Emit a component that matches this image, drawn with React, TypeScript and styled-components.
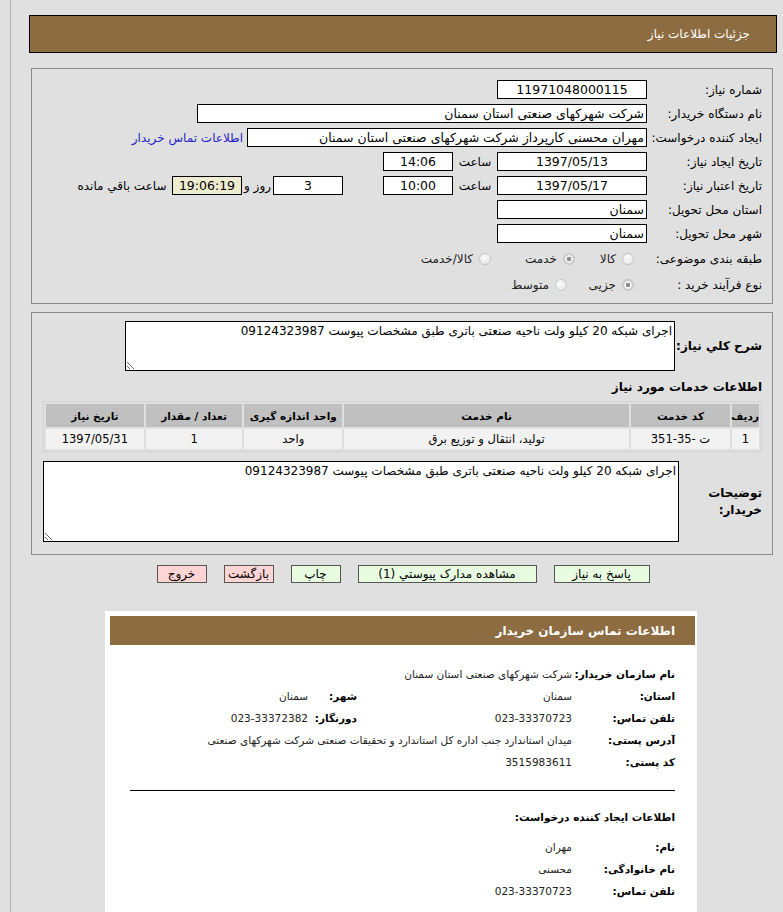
import React from 'react';
import styled, { createGlobalStyle } from 'styled-components';

const GlobalStyle = createGlobalStyle`
  body {
    margin: 0;
    background: #e0e0e0;
    font-family: Tahoma, "DejaVu Sans", sans-serif;
    font-size: 12px;
    color: #000;
  }
`;

const Page = styled.div`
  direction: rtl;
  margin-left: 10px;
  border-left: 1px solid #b4b4b4;
  min-height: 912px;
  padding: 15px 6px 0 18px;
  box-sizing: border-box;
`;

const TitleBar = styled.div`
  height: 38px;
  box-sizing: border-box;
  border: 1px solid #000;
  background: #8c6c40;
  color: #fff;
  display: flex;
  align-items: center;
  padding-right: 26px;
  font-size: 12px;
`;

const Panel = styled.div<{ $top: number }>`
  margin: ${(p) => p.$top}px 4px 0 2px;
  border: 1px solid #8a8a8a;
  box-sizing: border-box;
`;

const FormPanel = styled(Panel)`
  padding: 11px 10px 8px 0;
  display: flex;
  flex-direction: column;
  gap: 5px;
`;

const FormRow = styled.div`
  display: flex;
  align-items: center;
  height: 19px;
`;

const RadioRow = styled(FormRow)`
  height: 20px;
  margin-top: 1px;
`;

const Label = styled.div`
  width: 112px;
  flex-shrink: 0;
  margin-left: 3px;
  white-space: nowrap;
`;

const Box = styled.div<{ $w: number; $center?: boolean; $tint?: boolean }>`
  width: ${(p) => p.$w}px;
  height: 19px;
  box-sizing: border-box;
  border: 1px solid #000;
  background: ${(p) => (p.$tint ? '#eeecce' : '#fff')};
  text-align: ${(p) => (p.$center ? 'center' : 'right')};
  padding: 0 2px;
  font-size: 12.5px;
  line-height: 17px;
  white-space: nowrap;
  overflow: hidden;
  flex-shrink: 0;
`;

const SubLabel = styled.div<{ $w: number }>`
  width: ${(p) => p.$w}px;
  text-align: center;
  flex-shrink: 0;
  white-space: nowrap;
`;

const Spacer = styled.div<{ $w: number }>`
  width: ${(p) => p.$w}px;
  flex-shrink: 0;
`;

const Link = styled.a`
  color: #2525c8;
  text-decoration: none;
  margin-right: 4px;
  white-space: nowrap;
`;

const RadioGroup = styled.div`
  display: flex;
  align-items: center;
  padding-right: 13px;
`;

const Option = styled.label<{ $w?: number }>`
  display: flex;
  align-items: center;
  gap: 6px;
  width: ${(p) => (p.$w ? `${p.$w}px` : 'auto')};
  flex-shrink: 0;
  color: #222;
`;

const Radio = styled.span<{ $on?: boolean }>`
  width: 12px;
  height: 12px;
  border-radius: 50%;
  box-sizing: border-box;
  border: 1px solid #c6c6c6;
  background: ${(p) =>
    p.$on
      ? 'radial-gradient(circle, #8c8c8c 0 2px, #f2f2f2 2.5px 3.5px, #d0d0d0 4px)'
      : 'radial-gradient(circle at 40% 35%, #fafafa, #e4e4e4)'};
`;

const DetailPanel = styled(Panel)`
  padding: 8px 10px 12px 0;
`;

const AreaRow = styled.div<{ $top?: number }>`
  display: flex;
  align-items: center;
  margin-top: ${(p) => p.$top ?? 0}px;
`;

const BoldLabel = styled.div<{ $w: number }>`
  width: ${(p) => p.$w}px;
  flex-shrink: 0;
  font-weight: bold;
  font-size: 12px;
  line-height: 17px;
  white-space: nowrap;
`;

const WrapText = styled.span`
  display: inline-block;
  max-width: 62px;
  white-space: normal;
`;

const TextArea = styled.textarea<{ $w: number; $h: number }>`
  width: ${(p) => p.$w}px;
  height: ${(p) => p.$h}px;
  box-sizing: border-box;
  border: 1px solid #000;
  background: #fff;
  font-family: inherit;
  font-size: 12px;
  padding: 2px 2px;
  margin: 0;
  direction: rtl;
  outline: none;
`;

const SectionTitle = styled.div`
  margin-top: 8px;
  font-weight: bold;
  font-size: 12px;
  line-height: 16px;
`;

const ItemsTable = styled.table`
  margin: 6px 0 0 12px;
  width: 719px;
  table-layout: fixed;
  border: 1px solid #d2d2d2;
  border-spacing: 2px;
  font-size: 11.5px;
  th {
    background: #c0c0c0;
    height: 23px;
    font-weight: bold;
    font-size: 10.5px;
    padding: 0;
    white-space: nowrap;
  }
  td {
    background: #f2f2f2;
    height: 20px;
    text-align: center;
    padding: 0;
    white-space: nowrap;
  }
`;

const ButtonBar = styled.div`
  display: flex;
  justify-content: center;
  gap: 17px;
  margin-top: 10px;
  direction: rtl;
`;

const Button = styled.button<{ $w: number; $pink?: boolean }>`
  width: ${(p) => p.$w}px;
  height: 18px;
  padding: 0;
  border: 1px solid #555;
  background: ${(p) => (p.$pink ? '#ffd4d4' : '#e8fce2')};
  font-family: inherit;
  font-size: 12px;
  line-height: 16px;
  white-space: nowrap;
`;

const ContactCard = styled.div`
  width: 592px;
  margin: 28px 80px 0 auto;
  background: #fff;
  padding: 5px 2px 20px 5px;
  box-sizing: border-box;
  min-height: 300px;
`;

const ContactHeader = styled.div`
  height: 29px;
  background: #8c6c40;
  color: #fff;
  font-weight: bold;
  font-size: 12px;
  display: flex;
  align-items: center;
  padding-right: 20px;
`;

const ContactBody = styled.div`
  padding: 18px 20px 0;
`;

const InfoGrid = styled.div`
  display: grid;
  grid-template-columns: 103px 215px 49px 1fr;
  grid-auto-rows: 22px;
  align-items: center;
`;

const InfoLabel = styled.div`
  font-weight: bold;
  font-size: 10.5px;
  white-space: nowrap;
`;

const InfoValue = styled.div<{ $span?: number }>`
  font-size: 10.5px;
  color: #222;
  white-space: nowrap;
  grid-column: ${(p) => (p.$span ? `span ${p.$span}` : 'auto')};
`;

const Rule = styled.hr`
  margin: 17px 0 0;
  border: 0;
  border-top: 1px solid #000;
`;

const SubTitle = styled.div`
  margin: 18px 0 11px;
  font-weight: bold;
  font-size: 10.5px;
  line-height: 16px;
`;

const desc = 'اجرای شبکه 20 کیلو ولت ناحیه صنعتی باتری طبق مشخصات پیوست 09124323987';

const columns = [
  { title: 'ردیف', w: 27 },
  { title: 'کد خدمت', w: 98 },
  { title: 'نام خدمت', w: 283 },
  { title: 'واحد اندازه گیری', w: 97 },
  { title: 'تعداد / مقدار', w: 96 },
  { title: 'تاریخ نیاز', w: 97 },
];

const rows = [['1', 'ت -35-351', 'تولید، انتقال و توزیع برق', 'واحد', '1', '1397/05/31']];

const App = () => {
  return (
    <Page>
      <GlobalStyle />
      <TitleBar>جزئيات اطلاعات نياز</TitleBar>

      <FormPanel $top={15}>
        <FormRow>
          <Label>شماره نیاز:</Label>
          <Box $w={150} $center>11971048000115</Box>
        </FormRow>
        <FormRow>
          <Label>نام دستگاه خریدار:</Label>
          <Box $w={450}>شرکت شهرکهای صنعتی استان سمنان</Box>
        </FormRow>
        <FormRow>
          <Label>ایجاد کننده درخواست:</Label>
          <Box $w={400}>مهران محسنی کارپرداز شرکت شهرکهای صنعتی استان سمنان</Box>
          <Link href="#">اطلاعات تماس خریدار</Link>
        </FormRow>
        <FormRow>
          <Label>تاریخ ایجاد نیاز:</Label>
          <Box $w={150} $center>1397/05/13</Box>
          <SubLabel $w={44}>ساعت</SubLabel>
          <Box $w={70} $center>14:06</Box>
        </FormRow>
        <FormRow>
          <Label>تاریخ اعتبار نیاز:</Label>
          <Box $w={150} $center>1397/05/17</Box>
          <SubLabel $w={44}>ساعت</SubLabel>
          <Box $w={70} $center>10:00</Box>
          <Spacer $w={40} />
          <Box $w={70} $center>3</Box>
          <SubLabel $w={31}>روز و</SubLabel>
          <Box $w={70} $center $tint>19:06:19</Box>
          <SubLabel $w={100}>ساعت باقي مانده</SubLabel>
        </FormRow>
        <FormRow>
          <Label>استان محل تحویل:</Label>
          <Box $w={150}>سمنان</Box>
        </FormRow>
        <FormRow>
          <Label>شهر محل تحویل:</Label>
          <Box $w={150}>سمنان</Box>
        </FormRow>
        <RadioRow>
          <Label>طبقه بندی موضوعی:</Label>
          <RadioGroup>
            <Option $w={59}>
              <Radio />
              کالا
            </Option>
            <Option $w={84}>
              <Radio $on />
              خدمت
            </Option>
            <Option>
              <Radio />
              کالا/خدمت
            </Option>
          </RadioGroup>
        </RadioRow>
        <RadioRow>
          <Label>نوع فرآیند خرید :</Label>
          <RadioGroup>
            <Option $w={67}>
              <Radio $on />
              جزیی
            </Option>
            <Option>
              <Radio />
              متوسط
            </Option>
          </RadioGroup>
        </RadioRow>
      </FormPanel>

      <DetailPanel $top={8}>
        <AreaRow>
          <BoldLabel $w={87}>شرح کلي نیاز:</BoldLabel>
          <TextArea $w={550} $h={50} readOnly value={desc} />
        </AreaRow>
        <SectionTitle>اطلاعات خدمات مورد نیاز</SectionTitle>
        <ItemsTable>
          <colgroup>
            {columns.map((c) => (
              <col key={c.title} style={{ width: c.w }} />
            ))}
          </colgroup>
          <thead>
            <tr>
              {columns.map((c) => (
                <th key={c.title}>{c.title}</th>
              ))}
            </tr>
          </thead>
          <tbody>
            {rows.map((r) => (
              <tr key={r[0]}>
                {r.map((cell, i) => (
                  <td key={i}>{cell}</td>
                ))}
              </tr>
            ))}
          </tbody>
        </ItemsTable>
        <AreaRow $top={9}>
          <BoldLabel $w={83}>
            <WrapText>توضیحات خریدار:</WrapText>
          </BoldLabel>
          <TextArea $w={636} $h={81} readOnly value={desc} />
        </AreaRow>
      </DetailPanel>

      <ButtonBar>
        <Button $w={96}>پاسخ به نیاز</Button>
        <Button $w={179}>مشاهده مدارک پیوستي (1)</Button>
        <Button $w={50}>چاپ</Button>
        <Button $w={50} $pink>بازگشت</Button>
        <Button $w={50} $pink>خروج</Button>
      </ButtonBar>

      <ContactCard>
        <ContactHeader>اطلاعات تماس سازمان خریدار</ContactHeader>
        <ContactBody>
          <InfoGrid>
            <InfoLabel>نام سازمان خریدار:</InfoLabel>
            <InfoValue $span={3}>شرکت شهرکهای صنعتی استان سمنان</InfoValue>
            <InfoLabel>استان:</InfoLabel>
            <InfoValue>سمنان</InfoValue>
            <InfoLabel>شهر:</InfoLabel>
            <InfoValue>سمنان</InfoValue>
            <InfoLabel>تلفن تماس:</InfoLabel>
            <InfoValue>023-33370723</InfoValue>
            <InfoLabel>دورنگار:</InfoLabel>
            <InfoValue>023-33372382</InfoValue>
            <InfoLabel>آدرس پستی:</InfoLabel>
            <InfoValue $span={3}>میدان استاندارد جنب اداره کل استاندارد و تحقیقات صنعتی شرکت شهرکهای صنعتی</InfoValue>
            <InfoLabel>کد پستی:</InfoLabel>
            <InfoValue $span={3}>3515983611</InfoValue>
          </InfoGrid>
          <Rule />
          <SubTitle>اطلاعات ایجاد کننده درخواست:</SubTitle>
          <InfoGrid>
            <InfoLabel>نام:</InfoLabel>
            <InfoValue $span={3}>مهران</InfoValue>
            <InfoLabel>نام خانوادگی:</InfoLabel>
            <InfoValue $span={3}>محسنی</InfoValue>
            <InfoLabel>تلفن تماس:</InfoLabel>
            <InfoValue $span={3}>023-33370723</InfoValue>
          </InfoGrid>
        </ContactBody>
      </ContactCard>
    </Page>
  );
};

export default App;
